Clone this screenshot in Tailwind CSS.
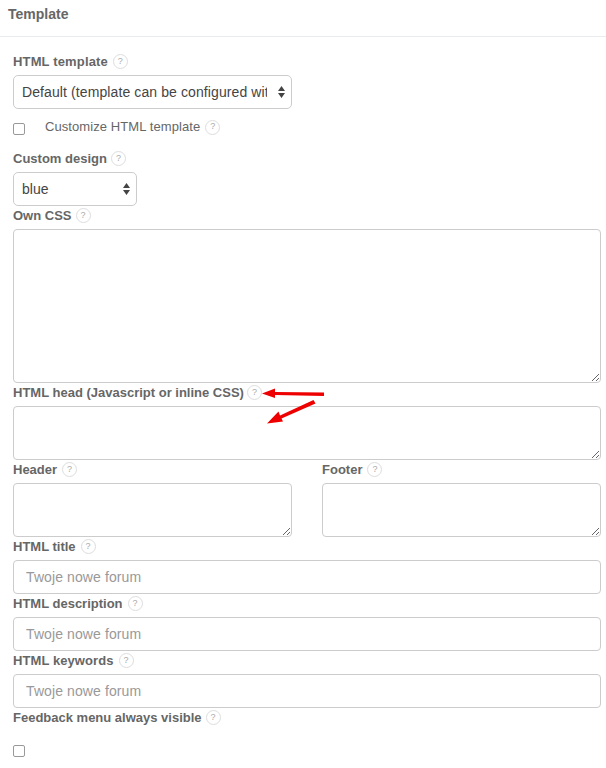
<!DOCTYPE html>
<html>
<head>
<meta charset="utf-8">
<script src="https://cdn.jsdelivr.net/npm/@tailwindcss/browser@4"></script>
</head>
<body class="bg-white font-['Liberation_Sans',Arial,sans-serif] text-[#555]">
<div class="relative w-[606px] h-[768px] overflow-hidden">
  <div class="h-[37px] border-b border-[#e9ecef] pl-[8px] pt-[5px] text-[14px] leading-[18px] font-bold text-[#666]">Template</div>
  <div class="px-[13px] pr-[5px] pt-[15px]">
    <div class="flex items-center gap-[5px] h-[18px] pt-[1px] mb-[5px] text-[13px] tracking-[0.15px] font-bold text-[#666]">HTML template <span class="flex items-center justify-center w-[15px] h-[15px] rounded-full border border-[#ddd] text-[9px] font-normal text-[#aaa]">?</span></div>
    <div class="relative w-[279px]">
      <select class="appearance-none block w-full h-[34px] border border-[#ccc] rounded-[5px] bg-white pl-[8px] pr-[24px] text-[14px] tracking-[0.1px] text-[#444] outline-none"><option>Default (template can be configured wit</option></select>
      <svg class="absolute right-[7px] top-[11px]" width="7" height="12" viewBox="0 0 7 12"><path d="M3.5 0 7 5H0zM3.5 12 0 7h7z" fill="#444"/></svg>
    </div>
    <div class="flex items-center h-[18px] mt-[9px] text-[13px] tracking-[0.08px] text-[#666]">
      <input type="checkbox" class="appearance-none w-[12px] h-[12px] mt-[3px] border border-[#999] rounded-[2px] bg-white">
      <span class="ml-[20px]">Customize HTML template</span>
      <span class="flex items-center justify-center ml-[5px] w-[15px] h-[15px] rounded-full border border-[#ddd] text-[9px] text-[#aaa]">?</span>
    </div>
    <div class="flex items-center gap-[4px] h-[18px] pt-[1px] mt-[13px] mb-[5px] text-[13px] font-bold text-[#666]">Custom design <span class="flex items-center justify-center w-[15px] h-[15px] rounded-full border border-[#ddd] text-[9px] font-normal text-[#aaa]">?</span></div>
    <div class="relative w-[124px]">
      <select class="appearance-none block w-full h-[34px] border border-[#ccc] rounded-[5px] bg-white pl-[8px] pr-[24px] text-[14px] text-[#444] outline-none"><option>blue</option></select>
      <svg class="absolute right-[7px] top-[11px]" width="7" height="12" viewBox="0 0 7 12"><path d="M3.5 0 7 5H0zM3.5 12 0 7h7z" fill="#444"/></svg>
    </div>
    <div class="flex items-center gap-[4px] h-[18px] pt-[1px] mb-[5px] text-[13px] font-bold text-[#666]">Own CSS <span class="flex items-center justify-center w-[15px] h-[15px] rounded-full border border-[#ddd] text-[9px] font-normal text-[#aaa]">?</span></div>
    <textarea class="block w-[588px] h-[154px] border border-[#ccc] rounded-[4px] bg-white outline-none"></textarea>
    <div class="flex items-center gap-[3px] h-[18px] pt-[1px] mb-[5px] text-[13px] font-bold text-[#666]">HTML head (Javascript or inline CSS) <span class="flex items-center justify-center w-[15px] h-[15px] rounded-full border border-[#ddd] text-[9px] font-normal text-[#aaa]">?</span></div>
    <textarea class="block w-[588px] h-[54px] border border-[#ccc] rounded-[4px] bg-white outline-none"></textarea>
    <div class="flex gap-[30px] w-[588px]">
      <div class="w-[279px]">
        <div class="flex items-center gap-[5px] h-[18px] pt-[1px] mb-[5px] text-[13px] font-bold text-[#666]">Header <span class="flex items-center justify-center w-[15px] h-[15px] rounded-full border border-[#ddd] text-[9px] font-normal text-[#aaa]">?</span></div>
        <textarea class="block w-full h-[54px] border border-[#ccc] rounded-[4px] bg-white outline-none"></textarea>
      </div>
      <div class="w-[279px]">
        <div class="flex items-center gap-[5px] h-[18px] pt-[1px] mb-[5px] text-[13px] font-bold text-[#666]">Footer <span class="flex items-center justify-center w-[15px] h-[15px] rounded-full border border-[#ddd] text-[9px] font-normal text-[#aaa]">?</span></div>
        <textarea class="block w-full h-[54px] border border-[#ccc] rounded-[4px] bg-white outline-none"></textarea>
      </div>
    </div>
    <div class="flex items-center gap-[5px] h-[18px] pt-[1px] mb-[5px] text-[13px] font-bold text-[#666]">HTML title <span class="flex items-center justify-center w-[15px] h-[15px] rounded-full border border-[#ddd] text-[9px] font-normal text-[#aaa]">?</span></div>
    <input class="block w-[588px] h-[34px] border border-[#ccc] rounded-[4px] bg-white px-[12px] text-[14px] tracking-[0.1px] outline-none placeholder:text-[#999]" placeholder="Twoje nowe forum">
    <div class="flex items-center gap-[5px] h-[18px] pt-[1px] mb-[5px] text-[13px] font-bold text-[#666]">HTML description <span class="flex items-center justify-center w-[15px] h-[15px] rounded-full border border-[#ddd] text-[9px] font-normal text-[#aaa]">?</span></div>
    <input class="block w-[588px] h-[34px] border border-[#ccc] rounded-[4px] bg-white px-[12px] text-[14px] tracking-[0.1px] outline-none placeholder:text-[#999]" placeholder="Twoje nowe forum">
    <div class="flex items-center gap-[5px] h-[18px] pt-[1px] mb-[5px] text-[13px] tracking-[0.08px] font-bold text-[#666]">HTML keywords <span class="flex items-center justify-center w-[15px] h-[15px] rounded-full border border-[#ddd] text-[9px] font-normal text-[#aaa]">?</span></div>
    <input class="block w-[588px] h-[34px] border border-[#ccc] rounded-[4px] bg-white px-[12px] text-[14px] tracking-[0.1px] outline-none placeholder:text-[#999]" placeholder="Twoje nowe forum">
    <div class="flex items-center gap-[4px] h-[18px] pt-[1px] text-[13px] font-bold text-[#666]">Feedback menu always visible <span class="flex items-center justify-center w-[15px] h-[15px] rounded-full border border-[#ddd] text-[9px] font-normal text-[#aaa]">?</span></div>
    <input type="checkbox" class="appearance-none block w-[12px] h-[12px] mt-[19px] border border-[#999] rounded-[2px] bg-white">
  </div>
  <svg class="absolute left-0 top-0 pointer-events-none" width="606" height="768" viewBox="0 0 606 768">
    <path d="M324 392.5 275 392 275 388.500 262 393.500 275 398 275 395 324 396z" fill="#ee0000"/>
    <path d="M313.500 400 280 415.500 278.500 411.500 267 423.500 283 421.500 281.500 418.500 315.500 403.500z" fill="#ee0000"/>
  </svg>
</div>
</body>
</html>
